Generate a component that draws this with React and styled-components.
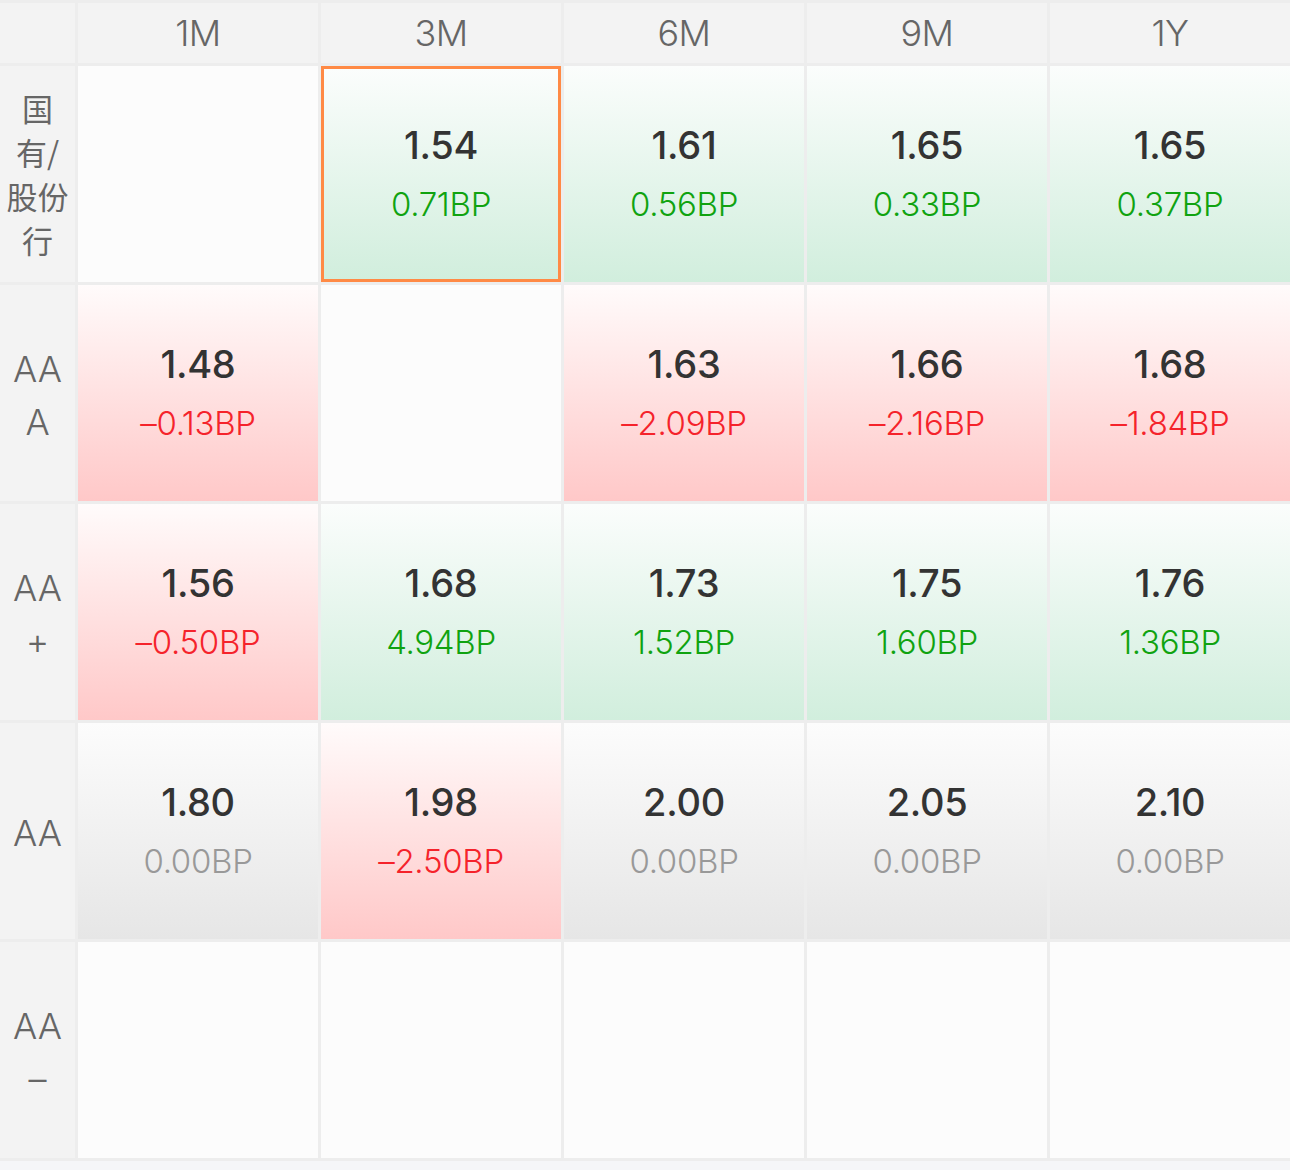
import React from "react";
import styled, { createGlobalStyle, css } from "styled-components";

const Global = createGlobalStyle`
  html, body {
    margin: 0;
    padding: 0;
    background: #f5f6f8;
  }
  body {
    font-family: Inter, "Liberation Sans", "Noto Sans CJK SC", sans-serif;
  }
`;

const Grid = styled.div`
  display: grid;
  grid-template-columns: 75px repeat(5, 240px);
  grid-template-rows: 60px repeat(5, 216px);
  gap: 3px;
  padding: 3px 0;
  background: #ededed;
  width: 1290px;
  box-sizing: border-box;
`;

const HeadCell = styled.div`
  background: #f3f3f3;
  color: #666;
  font-size: 36px;
  font-weight: 350;
  display: flex;
  align-items: center;
  justify-content: center;
  letter-spacing: -0.5px;
`;

const LabelCell = styled.div`
  background: #f3f3f3;
  color: #666;
  display: flex;
  flex-direction: column;
  align-items: center;
  justify-content: center;
  font-size: ${(p) => (p.$cjk ? "31px" : "36px")};
  line-height: ${(p) => (p.$cjk ? "44px" : "53px")};
  font-weight: 400;
  font-family: "Noto Sans CJK SC", Inter, sans-serif;
  ${(p) =>
    !p.$cjk &&
    css`
      font-family: Inter, "Liberation Sans", sans-serif;
      font-weight: 350;
      padding-top: 5px;
    `}
`;

const gradients = {
  up: "linear-gradient(180deg, #fbfdfc 0%, #d1eedd 100%)",
  down: "linear-gradient(180deg, #fffbfb 0%, #ffc8c8 100%)",
  flat: "linear-gradient(180deg, #fcfcfc 0%, #e6e6e6 100%)",
  none: "#fcfcfc",
};

const deltaColors = {
  up: "#10a310",
  down: "#f5232b",
  flat: "#999999",
};

const Cell = styled.div`
  box-sizing: border-box;
  background: ${(p) => gradients[p.$trend || "none"]};
  display: flex;
  flex-direction: column;
  align-items: center;
  justify-content: center;
  gap: 12px;
  ${(p) =>
    p.$selected &&
    css`
      border: 3px solid #ff8a45;
    `}
`;

const Value = styled.div`
  color: #333;
  font-size: 38px;
  font-weight: 500;
  line-height: 48px;
  letter-spacing: -0.3px;
`;

const Delta = styled.div`
  color: ${(p) => deltaColors[p.$trend]};
  font-size: 33px;
  font-weight: 350;
  line-height: 46px;
  letter-spacing: -0.3px;
`;

const columns = ["1M", "3M", "6M", "9M", "1Y"];

const rows = [
  {
    label: ["国", "有/", "股份", "行"],
    cjk: true,
    cells: [
      null,
      { v: "1.54", d: "0.71BP", t: "up", selected: true },
      { v: "1.61", d: "0.56BP", t: "up" },
      { v: "1.65", d: "0.33BP", t: "up" },
      { v: "1.65", d: "0.37BP", t: "up" },
    ],
  },
  {
    label: ["AA", "A"],
    cells: [
      { v: "1.48", d: "–0.13BP", t: "down" },
      null,
      { v: "1.63", d: "–2.09BP", t: "down" },
      { v: "1.66", d: "–2.16BP", t: "down" },
      { v: "1.68", d: "–1.84BP", t: "down" },
    ],
  },
  {
    label: ["AA", "+"],
    cells: [
      { v: "1.56", d: "–0.50BP", t: "down" },
      { v: "1.68", d: "4.94BP", t: "up" },
      { v: "1.73", d: "1.52BP", t: "up" },
      { v: "1.75", d: "1.60BP", t: "up" },
      { v: "1.76", d: "1.36BP", t: "up" },
    ],
  },
  {
    label: ["AA"],
    cells: [
      { v: "1.80", d: "0.00BP", t: "flat" },
      { v: "1.98", d: "–2.50BP", t: "down" },
      { v: "2.00", d: "0.00BP", t: "flat" },
      { v: "2.05", d: "0.00BP", t: "flat" },
      { v: "2.10", d: "0.00BP", t: "flat" },
    ],
  },
  {
    label: ["AA", "–"],
    cells: [null, null, null, null, null],
  },
];

export default function App() {
  return (
    <>
      <Global />
      <Grid>
        <HeadCell />
        {columns.map((c) => (
          <HeadCell key={c}>{c}</HeadCell>
        ))}
        {rows.map((row, ri) => (
          <React.Fragment key={ri}>
            <LabelCell $cjk={row.cjk}>
              {row.label.map((l, i) => (
                <span key={i}>{l}</span>
              ))}
            </LabelCell>
            {row.cells.map((cell, ci) =>
              cell ? (
                <Cell key={ci} $trend={cell.t} $selected={cell.selected}>
                  <Value>{cell.v}</Value>
                  <Delta $trend={cell.t}>{cell.d}</Delta>
                </Cell>
              ) : (
                <Cell key={ci} />
              )
            )}
          </React.Fragment>
        ))}
      </Grid>
    </>
  );
}
